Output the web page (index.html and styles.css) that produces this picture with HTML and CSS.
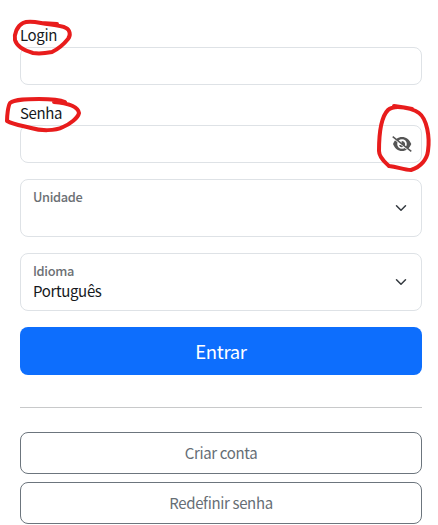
FILE: index.html
```html
<!DOCTYPE html>
<html lang="pt-BR">
<head>
<meta charset="utf-8">
<title>Login</title>
<link rel="stylesheet" href="styles.css">
</head>
<body>
<form class="login-form">
  <div class="field">
    <label class="label" for="login">Login</label>
    <input class="input" id="login" type="text">
  </div>
  <div class="field">
    <label class="label" for="senha">Senha</label>
    <div class="input password">
      <input class="bare" id="senha" type="password">
      <svg class="eye" viewBox="0 0 20 16" aria-hidden="true"><path fill-rule="evenodd" d="M1 8C2.800 3.500 6 1 10 1s7.500 2.500 9.300 7c-1.800 4.500-5.300 7-9.300 7S2.800 12.500 1 8zM10 3.200a4.800 4.800 0 1 0 0 9.600 4.800 4.800 0 0 0 0-9.600z"/><path d="M9.700 5A3.100 3.100 0 1 1 7 9h2.500z"/><path class="gap" d="M1.200 2.100 18 15.400"/><path class="slash" d="M.7.700 19.300 15.300"/></svg>
    </div>
  </div>
  <div class="select">
    <div><div class="caption">Unidade</div><div class="value"></div></div>
    <svg class="chevron" viewBox="0 0 16 16"><path d="m2 5 6 6 6-6"/></svg>
  </div>
  <div class="select">
    <div><div class="caption">Idioma</div><div class="value">Português</div></div>
    <svg class="chevron" viewBox="0 0 16 16"><path d="m2 5 6 6 6-6"/></svg>
  </div>
  <button class="button primary" type="button">Entrar</button>
  <hr class="divider">
  <button class="button outline" type="button">Criar conta</button>
  <button class="button outline" type="button">Redefinir senha</button>
</form>
<svg class="marks" viewBox="0 0 438 525" aria-hidden="true">
  <path d="M57 24L41 23C36 22 27 21 23 23C17 26 14 34 15 40C17 47 26 51 33 53C39 54 47 53 52 52C58 49 64 44 68 39C71 35 70 30 66 28C60 25 51 25 41 23"/>
  <path d="M65 102C58 99 48 99 39 99C28 99 15 99 10 103C8 106 7 116 7 121C14 125 24 126 31 128C41 131 55 131 63 127C70 124 78 118 79 113C78 106 65 103 54 102"/>
  <path d="M412 109C404 107 393 105 388 110C381 117 379 134 379 151C379 158 386 163 389 166C398 167 404 170 411 170C421 167 427 159 428 151C430 137 427 119 419 113C413 108 402 107 394 106"/>
</svg>
</body>
</html>
```
FILE: styles.css
```css
* {
  box-sizing: border-box;
}

body {
  margin: 0;
  height: 525px;
  overflow: hidden;
  background: #fff;
  color: #16191c;
  font: 15px/24px "Noto Sans CJK JP", sans-serif;
  letter-spacing: -0.35px;
}

.login-form {
  display: flex;
  flex-direction: column;
  padding: 23px 16px 0 20px;
}

.field {
  display: flex;
  flex-direction: column;
  margin-bottom: 16px;
}

.label {
  height: 24px;
}

.input {
  width: 100%;
  height: 38px;
  border: 1px solid #dee2e6;
  border-radius: 8px;
  background: #fff;
  outline: none;
}

.password {
  display: flex;
  align-items: center;
  padding-right: 9px;
}

.bare {
  flex: 1;
  min-width: 0;
  border: 0;
  outline: none;
  background: none;
}

.eye {
  width: 20px;
  height: 16px;
  fill: #555;
}

.gap {
  stroke: #fff;
  stroke-width: 1.3;
}

.slash {
  stroke: #555;
  stroke-width: 1.5;
}

.select {
  display: flex;
  align-items: center;
  justify-content: space-between;
  height: 58px;
  margin-bottom: 16px;
  padding: 0 14px 0 12px;
  border: 1px solid #dee2e6;
  border-radius: 8px;
}

.caption {
  height: 18px;
  color: #6c7074;
  font-size: 12.8px;
  font-weight: 500;
  line-height: 16px;
  letter-spacing: -0.35px;
}

.value {
  height: 21px;
  line-height: 19px;
}

.chevron {
  width: 12px;
  height: 12px;
  fill: none;
  stroke: #343a40;
  stroke-width: 2;
  stroke-linecap: round;
  stroke-linejoin: round;
}

.button {
  border-radius: 8px;
  padding: 0 0 1px;
  font-family: inherit;
  letter-spacing: inherit;
}

.primary {
  height: 48px;
  border: 0;
  background: #0d6efd;
  color: #fff;
  font-size: 18.5px;
}

.divider {
  width: 100%;
  height: 1px;
  margin: 32px 0 24px;
  border: 0;
  background: #c8c9ca;
}

.outline {
  height: 42px;
  margin-bottom: 8px;
  border: 1px solid #6c757d;
  background: #fff;
  color: #666e75;
  font-size: 15px;
}

.marks {
  position: absolute;
  inset: 0;
  width: 438px;
  height: 525px;
  fill: none;
  stroke: #e81c1c;
  stroke-width: 4;
  stroke-linecap: round;
  stroke-linejoin: round;
  pointer-events: none;
}
```
